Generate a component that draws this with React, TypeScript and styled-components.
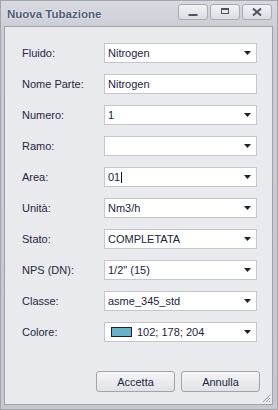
import React from "react";
import styled, { createGlobalStyle } from "styled-components";

const Global = createGlobalStyle`
  html, body { margin: 0; padding: 0; background: #c9cad2; }
  * { box-sizing: border-box; }
`;

const FONT = `"Tahoma", "Liberation Sans", Arial, sans-serif`;

const Window = styled.div`
  width: 278px;
  height: 410px;
  display: flex;
  flex-direction: column;
  background: linear-gradient(#d9dae1, #cbccd4 30px, #c6c7cf);
  border: 1px solid #a3a4ad;
  font-family: ${FONT};
  color: #1e2640;
`;

const TitleBar = styled.div`
  height: 25px;
  display: flex;
  align-items: flex-start;
  padding: 3px 5px 0 6px;
`;

const Title = styled.div`
  flex: 1;
  font-weight: bold;
  font-size: 11.5px;
  line-height: 17px;
  margin-top: 2px;
  color: #4f5c75;
  text-shadow: 0 0 2px #ffffff;
`;

const TitleButtons = styled.div`
  display: flex;
  gap: 2px;
`;

const TitleButton = styled.div`
  width: 30px;
  height: 16px;
  border: 1px solid #a7a8b1;
  border-radius: 3px;
  background: linear-gradient(#f2f2f5, #dcdde3);
  display: flex;
  align-items: center;
  justify-content: center;
`;

const Client = styled.div`
  position: relative;
  flex: 1;
  margin: 0 4px 4px 3px;
  border: 1px solid #9fa0aa;
  background: #e9eaee;
  display: flex;
  flex-direction: column;
`;

const Form = styled.div`
  display: grid;
  grid-template-columns: 82px 153px;
  row-gap: 11px;
  padding: 16px 0 0 17px;
  align-items: center;
`;

const Label = styled.div`
  font-size: 11px;
  line-height: 20px;
  color: #1f2740;
`;

const Field = styled.div`
  height: 20px;
  border: 1px solid #c4c5cd;
  background: #ffffff;
  display: flex;
  align-items: center;
  padding: 0 5px 0 3px;
  font-size: 11px;
  color: #1c2340;
  white-space: nowrap;
`;

const Value = styled.span`
  flex: 1;
  display: flex;
  align-items: center;
`;

const Caret = styled.span`
  display: inline-block;
  width: 1px;
  height: 11px;
  background: #101020;
  margin-left: 1px;
`;

const Swatch = styled.span<{ $c: string }>`
  display: inline-block;
  width: 21px;
  height: 10px;
  border: 1px solid #1b1f30;
  background: ${(p) => p.$c};
  margin: 0 5px 0 3px;
`;

const Arrow = () => (
  <svg width="7" height="4" viewBox="0 0 7 4">
    <path d="M0 0 H7 L3.5 4 Z" fill="#1e2030" />
  </svg>
);

const ButtonRow = styled.div`
  margin-top: auto;
  display: flex;
  justify-content: flex-end;
  gap: 6px;
  padding: 0 12px 12px 0;
`;

const Button = styled.button`
  width: 79px;
  height: 21px;
  border: 1px solid #a2a3ac;
  border-radius: 3px;
  background: linear-gradient(#f5f5f7, #e1e2e7);
  font-family: ${FONT};
  font-size: 11px;
  color: #1e2640;
  padding: 0;
`;

const Grip = styled.svg`
  position: absolute;
  right: 1px;
  bottom: 1px;
`;

type Row = { label: string; value: string; combo: boolean; caret?: boolean; color?: string };

const rows: Row[] = [
  { label: "Fluido:", value: "Nitrogen", combo: true },
  { label: "Nome Parte:", value: "Nitrogen", combo: false },
  { label: "Numero:", value: "1", combo: true },
  { label: "Ramo:", value: "", combo: true },
  { label: "Area:", value: "01", combo: true, caret: true },
  { label: "Unità:", value: "Nm3/h", combo: true },
  { label: "Stato:", value: "COMPLETATA", combo: true },
  { label: "NPS (DN):", value: "1/2\" (15)", combo: true },
  { label: "Classe:", value: "asme_345_std", combo: true },
  { label: "Colore:", value: "102; 178; 204", combo: true, color: "rgb(102,178,204)" },
];

export default function App() {
  return (
    <>
      <Global />
      <Window>
        <TitleBar>
          <Title>Nuova Tubazione</Title>
          <TitleButtons>
            <TitleButton>
              <svg width="10" height="10" viewBox="0 0 10 10">
                <rect x="0.5" y="7" width="9" height="2" fill="#4f5262" />
              </svg>
            </TitleButton>
            <TitleButton>
              <svg width="10" height="10" viewBox="0 0 10 10">
                <rect x="1.5" y="1.5" width="7" height="5" fill="none" stroke="#4f5262" strokeWidth="1" />
                <rect x="1" y="1" width="8" height="2" fill="#4f5262" />
              </svg>
            </TitleButton>
            <TitleButton>
              <svg width="10" height="10" viewBox="0 0 10 10">
                <path d="M1 1.5 L9 8.5 M9 1.5 L1 8.5" stroke="#4f5262" strokeWidth="2" />
              </svg>
            </TitleButton>
          </TitleButtons>
        </TitleBar>
        <Client>
          <Form>
            {rows.map((r) => (
              <React.Fragment key={r.label}>
                <Label>{r.label}</Label>
                <Field>
                  {r.color && <Swatch $c={r.color} />}
                  <Value>
                    {r.value}
                    {r.caret && <Caret />}
                  </Value>
                  {r.combo && <Arrow />}
                </Field>
              </React.Fragment>
            ))}
          </Form>
          <ButtonRow>
            <Button>Accetta</Button>
            <Button>Annulla</Button>
          </ButtonRow>
          <Grip width="10" height="10" viewBox="0 0 10 10">
            <path d="M9 2 L2 9 M9 5 L5 9 M9 8 L8 9" stroke="#9a9ba5" strokeWidth="1" />
          </Grip>
        </Client>
      </Window>
    </>
  );
}
